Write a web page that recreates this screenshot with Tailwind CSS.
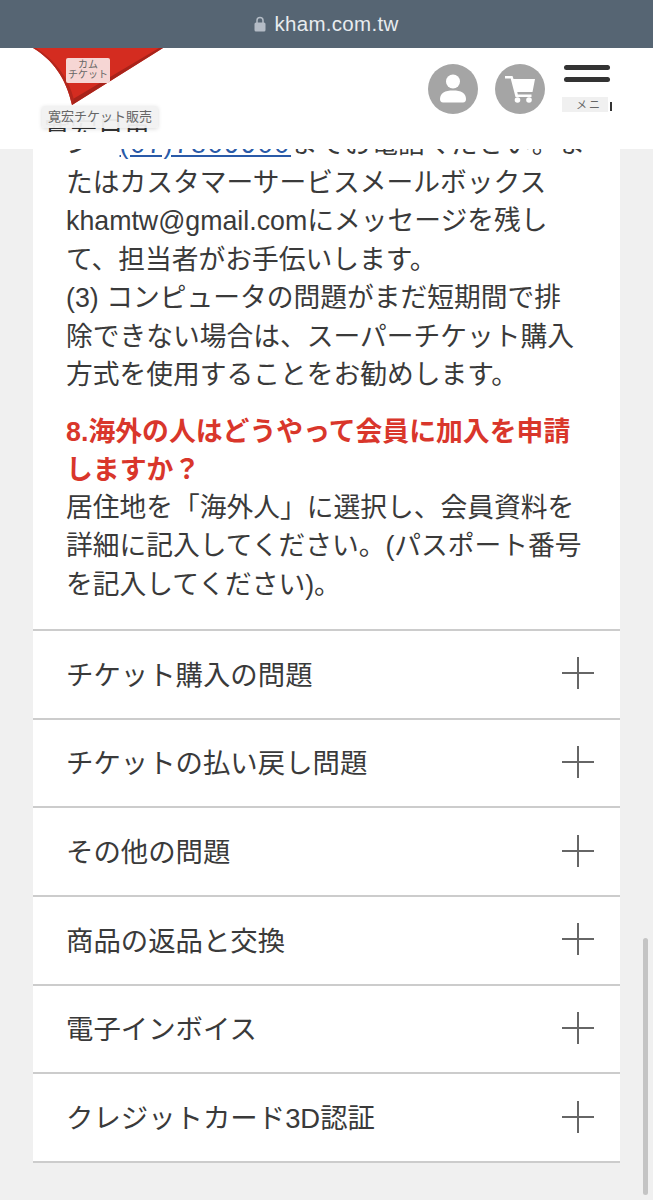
<!DOCTYPE html>
<html lang="ja">
<head>
    <meta charset="UTF-8" />
    <meta name="viewport" content="width=device-width, initial-scale=1.0" />
    <title>kham.com.tw</title>
    <script src="https://cdn.jsdelivr.net/npm/@tailwindcss/browser@4"></script>
</head>
<body class="bg-[#f0f0f0] font-['Liberation_Sans','Noto_Sans_CJK_JP',sans-serif] text-[#3a3a3a]">
<div class="relative h-[1200px] overflow-hidden">
    <!-- browser address bar -->
    <div class="relative z-20 h-[48px] bg-[#566573] flex items-center justify-center gap-[8px] text-[#e8ecef]">
        <svg width="12" height="16" viewBox="0 0 12 16" class="text-[#b4bcc6]">
            <path d="M3 7V4.5a3 3 0 0 1 6 0V7" fill="none" stroke="currentColor" stroke-width="1.5"/>
            <rect x="0.5" y="6.5" width="11" height="9" rx="1.5" fill="currentColor"/>
        </svg>
        <span class="text-[20.5px] tracking-[0.3px]">kham.com.tw</span>
    </div>

    <!-- site header -->
    <header class="relative z-10 h-[101px] bg-white">
        <div class="absolute left-[33px] top-0 w-[130px] h-[66px]">
            <svg width="130" height="58" viewBox="0 0 130 58">
                <path d="M0 0H130L39 57C33 30 20 12 0 0Z" fill="#d42c20"/>
                <path d="M39 57L130 0L126 0L40 51Z" fill="#a8231a"/>
                <path d="M39 57C33 30 20 12 0 0L3 0C22 12 36 30 41 52Z" fill="#b3261c"/>
            </svg>
            <div class="absolute left-[33px] top-[10px] w-[44px] h-[25px] rounded-[2px] bg-[#f6d6d4] text-[#666] text-[10px] leading-[10px] text-center pt-[2px]">カム<br>チケット</div>
        </div>
        <div class="absolute left-[44px] top-[60px] h-[24px] overflow-hidden text-[#333] text-[26.6px] leading-[38px] pt-[4px] whitespace-nowrap">寛宏日東</div>
        <div class="absolute left-[42px] top-[58px] w-[116px] h-[22px] rounded-[2px] bg-[#f1f1f1]/95 shadow-[0_1px_4px_rgba(0,0,0,0.15)] text-[#666] text-[13px] leading-[22px] text-center whitespace-nowrap">寛宏チケット販売</div>

        <div class="absolute left-[428px] top-[16px] flex gap-[17px]">
            <div class="w-[50px] h-[50px] rounded-full bg-[#a5a5a5] flex items-center justify-center">
                <svg width="26" height="30" viewBox="0 0 26 30" fill="#fff">
                    <circle cx="13" cy="7.5" r="7"/>
                    <path d="M0 25c0-6 5-8.500 13-8.500s13 2.500 13 8.500c0 2-1 3.500-3 3.500H3c-2 0-3-1.500-3-3.500Z"/>
                </svg>
            </div>
            <div class="w-[50px] h-[50px] rounded-full bg-[#a5a5a5] flex items-center justify-center">
                <svg width="30" height="30" viewBox="0 0 30 30" fill="#fff">
                    <path d="M0 2h7.500l1 3H30l-2.500 13H12.300l.5 2.500H26.500V23H10.500L5.700 4.500H0Z"/>
                    <circle cx="12.500" cy="26" r="2.800"/>
                    <circle cx="24" cy="26" r="2.800"/>
                </svg>
            </div>
        </div>

        <div class="absolute left-[562px] top-[17px] w-[50px]">
            <div class="ml-[2px] w-[46px] h-[5px] rounded-full bg-[#333]"></div>
            <div class="ml-[2px] mt-[7px] w-[46px] h-[5px] rounded-full bg-[#333]"></div>
            <div class="mt-[15px] flex items-center">
                <div class="w-[46px] h-[15px] bg-[#f0f0f0] text-[#666] text-[11px] leading-[17px] pl-[14px] tracking-[2px] overflow-hidden whitespace-nowrap">メニ</div>
                <div class="ml-[2px] mt-[3px] w-[2px] h-[9px] bg-[#333]"></div>
            </div>
        </div>
    </header>

    <!-- faq card -->
    <main class="mx-[33px] -mt-[24px] w-[587px] bg-white">
        <div class="pl-[33px] pr-[20px] whitespace-nowrap text-[26.75px] leading-[38.5px]">
            <p>ン・<a href="#" class="text-[#2a5aa8] underline tracking-[1.8px]">(07)7809900</a>までお電話ください。ま<br>たはカスタマーサービスメールボックス<br>khamtw@gmail.comにメッセージを残し<br>て、担当者がお手伝いします。<br>(3) コンピュータの問題がまだ短期間で排<br>除できない場合は、スーパーチケット購入<br>方式を使用することをお勧めします。</p>
            <h3 class="mt-[18px] font-bold text-[#d9362b] text-[26.85px] leading-[38px]">8.海外の人はどうやって会員に加入を申請<br>しますか？</h3>
            <p class="mb-[25px]">居住地を「海外人」に選択し、会員資料を<br>詳細に記入してください。(パスポート番号<br>を記入してください)。</p>
        </div>
        <div class="border-t-2 border-[#ccc]">
            <div class="h-[88.67px] border-b-2 border-[#ccc] pl-[33px] pr-[25px] flex items-center justify-between text-[27.4px]">
                <span class="mt-[2px]">チケット購入の問題</span>
                <svg width="34" height="34" viewBox="0 0 34 34" class="-mt-[2px]"><path d="M17 1V33M1 17H33" stroke="#666" stroke-width="2"/></svg>
            </div>
            <div class="h-[88.67px] border-b-2 border-[#ccc] pl-[33px] pr-[25px] flex items-center justify-between text-[27.4px]">
                <span class="mt-[2px]">チケットの払い戻し問題</span>
                <svg width="34" height="34" viewBox="0 0 34 34" class="-mt-[2px]"><path d="M17 1V33M1 17H33" stroke="#666" stroke-width="2"/></svg>
            </div>
            <div class="h-[88.67px] border-b-2 border-[#ccc] pl-[33px] pr-[25px] flex items-center justify-between text-[27.4px]">
                <span class="mt-[2px]">その他の問題</span>
                <svg width="34" height="34" viewBox="0 0 34 34" class="-mt-[2px]"><path d="M17 1V33M1 17H33" stroke="#666" stroke-width="2"/></svg>
            </div>
            <div class="h-[88.67px] border-b-2 border-[#ccc] pl-[33px] pr-[25px] flex items-center justify-between text-[27.4px]">
                <span class="mt-[2px]">商品の返品と交換</span>
                <svg width="34" height="34" viewBox="0 0 34 34" class="-mt-[2px]"><path d="M17 1V33M1 17H33" stroke="#666" stroke-width="2"/></svg>
            </div>
            <div class="h-[88.67px] border-b-2 border-[#ccc] pl-[33px] pr-[25px] flex items-center justify-between text-[27.4px]">
                <span class="mt-[2px]">電子インボイス</span>
                <svg width="34" height="34" viewBox="0 0 34 34" class="-mt-[2px]"><path d="M17 1V33M1 17H33" stroke="#666" stroke-width="2"/></svg>
            </div>
            <div class="h-[88.67px] border-b-2 border-[#ccc] pl-[33px] pr-[25px] flex items-center justify-between text-[27.4px]">
                <span class="mt-[2px]">クレジットカード3D認証</span>
                <svg width="34" height="34" viewBox="0 0 34 34" class="-mt-[2px]"><path d="M17 1V33M1 17H33" stroke="#666" stroke-width="2"/></svg>
            </div>
        </div>
    </main>

    <!-- scrollbar overlay -->
    <div class="absolute left-[643px] top-[938px] w-[5px] h-[257px] rounded-full bg-[#c4c4c4]"></div>
</div>
</body>
</html>
